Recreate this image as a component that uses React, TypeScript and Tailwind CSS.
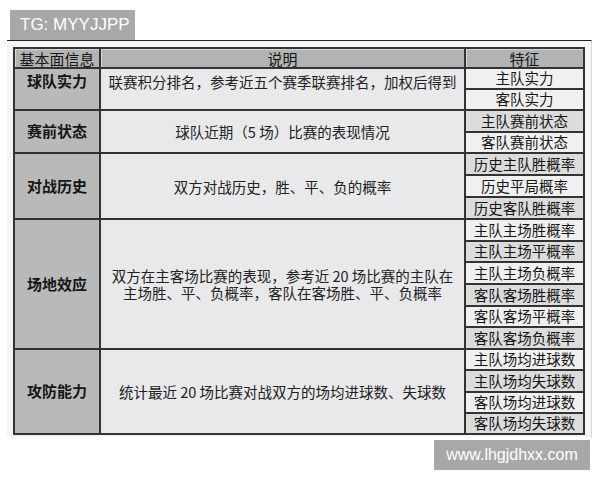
import React from "react";

type Row = {
  name: string;
  desc: string;
  h: number;
  feats: string[];
  shade: number[];
  pad?: string;
};

const rows: Row[] = [
  {
    name: "球队实力",
    desc: "联赛积分排名，参考近五个赛季联赛排名，加权后得到",
    h: 42,
    feats: ["主队实力", "客队实力"],
    shade: [0, 0],
    pad: "pb-[15px]",
  },
  {
    name: "赛前状态",
    desc: "球队近期（5 场）比赛的表现情况",
    h: 43,
    feats: ["主队赛前状态", "客队赛前状态"],
    shade: [1, 0],
  },
  {
    name: "对战历史",
    desc: "双方对战历史，胜、平、负的概率",
    h: 66,
    feats: ["历史主队胜概率", "历史平局概率", "历史客队胜概率"],
    shade: [1, 0, 1],
  },
  {
    name: "场地效应",
    desc: "双方在主客场比赛的表现，参考近 20 场比赛的主队在\n主场胜、平、负概率，客队在客场胜、平、负概率",
    h: 130,
    feats: ["主队主场胜概率", "主队主场平概率", "主队主场负概率", "客队客场胜概率", "客队客场平概率", "客队客场负概率"],
    shade: [0, 1, 0, 1, 0, 1],
  },
  {
    name: "攻防能力",
    desc: "统计最近 20 场比赛对战双方的场均进球数、失球数",
    h: 83,
    feats: ["主队场均进球数", "主队场均失球数", "客队场均进球数", "客队场均失球数"],
    shade: [0, 1, 0, 1],
  },
];

const cjk = { fontFamily: '"Noto Sans CJK SC", "Noto Sans", sans-serif' };
const latin = { fontFamily: '"Liberation Sans", Arial, sans-serif' };

export default function App() {
  return (
    <div className="w-[600px] h-[480px] bg-white overflow-hidden">
      <div className="ml-[10px] pt-[10px]">
        <div className="w-[125px] h-[30px] bg-[#a8a8a8] text-white text-[17px] flex items-center pl-[10px]" style={latin}>
          TG: MYYJJPP
        </div>
      </div>

      <div className="ml-[7px] w-[585px] border-t-[1.5px] border-t-[#222] border-r border-r-[#d4d4d4] bg-[#f5f5f5] pl-[6px] pt-[6px] pb-[2px]" style={cjk}>
        <div className="w-[572px] border-2 border-[#333] text-[#151515]">
          <div className="flex h-[20px] border-b-2 border-[#333] bg-[#b3b3b3] text-[15px] leading-none">
            <div className="w-[86px] border-r-2 border-[#333] flex items-center justify-center shadow-[inset_1px_1px_0_#d6d6d6]">基本面信息</div>
            <div className="w-[365px] border-r-2 border-[#333] flex items-center justify-center shadow-[inset_1px_1px_0_#d6d6d6]">说明</div>
            <div className="flex-1 flex items-center justify-center shadow-[inset_1px_1px_0_#d6d6d6]">特征</div>
          </div>

          {rows.map((r, i) => (
            <div
              key={r.name}
              className={`flex ${i < rows.length - 1 ? "border-b-2 border-[#333]" : ""}`}
              style={{ height: r.h }}
            >
              <div className={`w-[86px] border-r-2 border-[#333] bg-[#b9b9b9] flex items-center justify-center text-[15px] font-bold ${r.pad ?? ""}`}>
                {r.name}
              </div>
              <div className={`w-[365px] border-r-2 border-[#333] bg-[#e9e9eb] flex items-center justify-center text-[14.5px] leading-[17px] text-[#222] ${r.pad ?? ""}`}>
                <p className="whitespace-pre text-center">{r.desc}</p>
              </div>
              <div className="flex-1 flex flex-col">
                {r.feats.map((f, j) => (
                  <div
                    key={f}
                    className={`flex-1 flex items-center justify-center text-[14.5px] leading-none ${
                      j < r.feats.length - 1 ? "border-b-2 border-[#333]" : ""
                    } ${r.shade[j] ? "bg-[#dcdcdc]" : "bg-[#f0f0f0]"}`}
                  >
                    {f}
                  </div>
                ))}
              </div>
            </div>
          ))}
        </div>
      </div>

      <div className="ml-[434px] mt-[3px] w-[156px] h-[30px] bg-[#a8a8a8] text-white text-[16px] flex items-center justify-center" style={latin}>
        www.lhgjdhxx.com
      </div>
    </div>
  );
}
